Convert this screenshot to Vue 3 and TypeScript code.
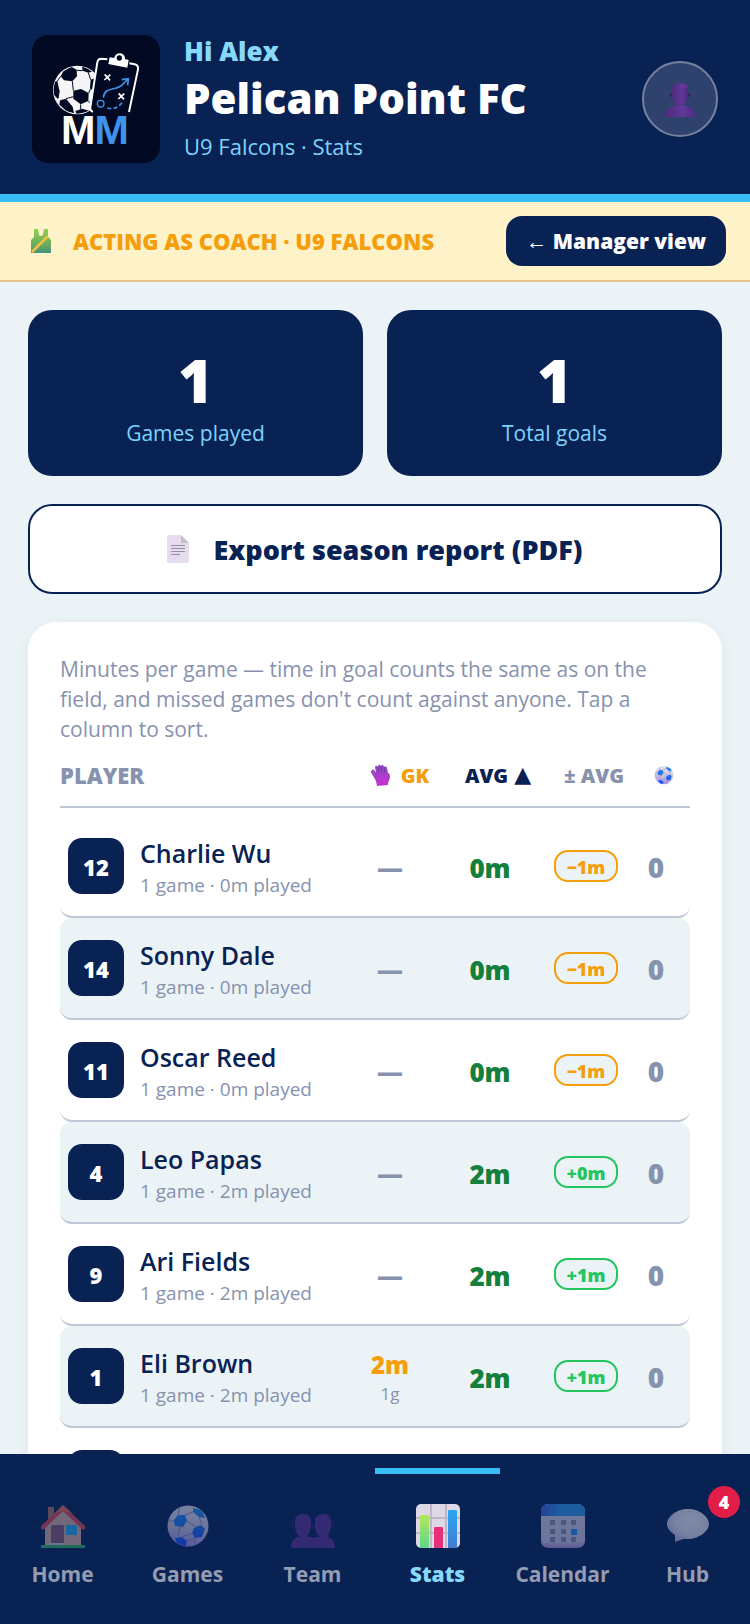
<script setup lang="ts">
interface Player {
  id: number
  number: string
  name: string
  detail: string
  gk: string
  gkGames?: string
  avg: string
  diff: string
  goals: string
}

interface Tab {
  id: string
  label: string
  badge?: number
}

const players: Player[] = [
  { id: 1, number: '12', name: 'Charlie Wu', detail: '1 game · 0m played', gk: '—', avg: '0m', diff: '−1m', goals: '0' },
  { id: 2, number: '14', name: 'Sonny Dale', detail: '1 game · 0m played', gk: '—', avg: '0m', diff: '−1m', goals: '0' },
  { id: 3, number: '11', name: 'Oscar Reed', detail: '1 game · 0m played', gk: '—', avg: '0m', diff: '−1m', goals: '0' },
  { id: 4, number: '4', name: 'Leo Papas', detail: '1 game · 2m played', gk: '—', avg: '2m', diff: '+0m', goals: '0' },
  { id: 5, number: '9', name: 'Ari Fields', detail: '1 game · 2m played', gk: '—', avg: '2m', diff: '+1m', goals: '0' },
  { id: 6, number: '1', name: 'Eli Brown', detail: '1 game · 2m played', gk: '2m', gkGames: '1g', avg: '2m', diff: '+1m', goals: '0' },
  { id: 7, number: '', name: '', detail: '', gk: '', avg: '', diff: '', goals: '' },
]

const tabs: Tab[] = [
  { id: 'home', label: 'Home' },
  { id: 'games', label: 'Games' },
  { id: 'team', label: 'Team' },
  { id: 'stats', label: 'Stats' },
  { id: 'calendar', label: 'Calendar' },
  { id: 'hub', label: 'Hub', badge: 4 },
]

const activeTab = 'stats'
</script>

<template>
  <div class="app">
    <svg class="defs" aria-hidden="true">
      <defs>
        <linearGradient id="ballBase" x1="0.6" y1="0" x2="0.4" y2="1">
          <stop offset="0" stop-color="#e9e6ee" /><stop offset="0.6" stop-color="#c4bedb" /><stop offset="1" stop-color="#a391f2" />
        </linearGradient>
        <linearGradient id="ballPatch" x1="0" y1="0" x2="0" y2="1">
          <stop offset="0" stop-color="#2391ee" /><stop offset="1" stop-color="#2449f4" />
        </linearGradient>
        <clipPath id="ballClip"><circle cx="22" cy="22" r="20" /></clipPath>
        <symbol id="ball" viewBox="0 0 44 44">
          <circle cx="22" cy="22" r="20.500" fill="url(#ballBase)" />
          <g clip-path="url(#ballClip)">
            <path d="M12 11l7 0 2 6-4 6-8-1-1-6zM27 4l9 2 3 8-6-1-6-5zM28 24l7-3 4 4-3 8-7 1-3-5zM9 34l7-1 5 4-2 7-7 0z" fill="url(#ballPatch)" />
            <path d="M19 11l8-3M21 17l9 6M14 23l-2 9M8 17H1M16 33l10-4M33 13l3 8M12 11l2-8M29 34l0 10M21 37l8-3" fill="none" stroke="#8d87b5" />
          </g>
        </symbol>
      </defs>
    </svg>

    <header class="top">
      <svg class="logo" viewBox="36 12 384 384" role="img" aria-label="Team logo">
        <defs>
          <clipPath id="logoBall"><path d="M90 90H233L211 240 180 262H90z" /></clipPath>
          <clipPath id="logoBallRound"><circle cx="172" cy="177" r="71" /></clipPath>
        </defs>
        <rect x="36" y="12" width="384" height="384" fill="#020922" />
        <g clip-path="url(#logoBall)">
          <circle cx="172" cy="177" r="73" fill="#f5f5f7" />
          <g clip-path="url(#logoBallRound)">
            <path d="M130 121l24-14 16 9 1 20-14 15-25-3-10-12zM160 179l23-5 23 12-1 24-23 10-22-17zM98 152l14-2 6 28-4 26-16-16zM120 208l18-5 20 24 4 20-22-6-22-20zM185 101l34 20-14 4-17-6zM166 240l20-7 22 6-10 16-26 2zM212 146l16-6-6 44-12-14z" fill="#020922" />
            <path d="M157 151l3 28M171 118l17 1M138 203l22-6M112 150l10-14M118 178l-4 24M182 220l0 14M205 125l7 21M206 186l6-14M205 210l10 10M154 107l4-8" fill="none" stroke="#020922" stroke-width="3" />
          </g>
        </g>
        <path d="M262 85l-18-2q-10 0-12 11L211 228q-1 12 8 14M328 97l16 3q12 3 10 15l-27 128" fill="none" stroke="#fff" stroke-width="6" />
        <path d="M269 79l14 2a16 16 0 0 1 32 3l11 3-4 23-57-11z" fill="#fff" />
        <circle cx="298" cy="81" r="8" fill="#020922" />
        <path d="M254 130l16 18M271 131l-18 16M296 187l16 18M313 188l-18 16" stroke="#fff" stroke-width="5" />
        <path d="M250 200c4-36 40-18 60-42l14-14M305 146l20-3-2 20" fill="none" stroke="#3f93ea" stroke-width="5" />
        <path d="M262 231q26 8 46-18" fill="none" stroke="#3f93ea" stroke-width="5" stroke-dasharray="12 7" />
        <circle cx="242" cy="218" r="10" fill="none" stroke="#3f93ea" stroke-width="4" />
        <text class="mark" x="175" y="338" text-anchor="middle" fill="#fff">M</text>
        <text class="mark" x="275" y="338" text-anchor="middle" fill="#3f93ea">M</text>
      </svg>
      <div class="heading">
        <p class="hello">Hi Alex</p>
        <h1>Pelican Point FC</h1>
        <p class="crumb">U9 Falcons · Stats</p>
      </div>
      <button class="avatar" type="button" aria-label="Account">
        <svg viewBox="0 0 36 36">
          <defs>
            <linearGradient id="person" x1="0" y1="0" x2="1" y2="0">
              <stop offset="0" stop-color="#4c2c7c" /><stop offset="0.6" stop-color="#603899" /><stop offset="1" stop-color="#4f2b80" />
            </linearGradient>
          </defs>
          <path d="M2 36c1-8 7-12 16-12s15 4 16 12z" fill="url(#person)" />
          <circle cx="10" cy="14" r="2" fill="#3a1b66" />
          <circle cx="26" cy="14" r="2" fill="#3a1b66" />
          <path d="M10 7q1-5 8-5t8 5v8q-1 9-8 9t-8-9z" fill="url(#person)" />
          <path d="M18 5q4-1 7 1" fill="none" stroke="#7241a4" />
        </svg>
      </button>
    </header>

    <div class="banner">
      <svg class="vest" viewBox="0 0 20 24" aria-hidden="true">
        <defs>
          <linearGradient id="vest" x1="0" y1="0" x2="0" y2="1">
            <stop offset="0" stop-color="#8ed04f" /><stop offset="0.7" stop-color="#68a95e" /><stop offset="1" stop-color="#408f80" />
          </linearGradient>
        </defs>
        <path d="M3 0h4l1 6q2 2 4 0l1-6h4v8l3 3v13H0V11l3-3z" fill="url(#vest)" />
        <path d="M1 23L17 7" stroke="#f6bf42" stroke-width="2.500" />
      </svg>
      <strong class="acting">ACTING AS COACH · U9 FALCONS</strong>
      <button class="switch" type="button"><span class="arrow">←</span> Manager view</button>
    </div>

    <main>
      <section class="totals" aria-label="Season totals">
        <div class="total"><strong>1</strong><span>Games played</span></div>
        <div class="total"><strong>1</strong><span>Total goals</span></div>
      </section>

      <button class="export" type="button">
        <svg viewBox="0 0 22 28" aria-hidden="true">
          <path d="M2 0h12l8 8v18q0 2-2 2H2q-2 0-2-2V2q0-2 2-2z" fill="#e6dcef" />
          <path d="M14 0l8 8h-8z" fill="#c5c0ca" />
          <path d="M4 10.500h14M4 13.500h14M4 16.500h14M4 19.500h9" stroke="#978e9f" />
        </svg>
        Export season report (PDF)
      </button>

      <section class="card">
        <p class="note">Minutes per game — time in goal counts the same as on the field, and missed games don't count against anyone. Tap a column to sort.</p>
        <table>
          <thead>
            <tr>
              <th scope="col"><button type="button" class="player-head">PLAYER</button></th>
              <th scope="col">
                <button type="button" class="gk-head">
                  <svg class="glove" viewBox="0 0 20 22" aria-hidden="true">
                    <defs>
                      <linearGradient id="glove" x1="0" y1="0" x2="0.300" y2="1">
                        <stop offset="0" stop-color="#8450bd" /><stop offset="1" stop-color="#c232cf" />
                      </linearGradient>
                    </defs>
                    <path d="M1 6q2-2 4 3l-1-6q1-3 3 0V2q1-3 3 0 2-3 3 1 2-2 3 1l1 5q2 0 2 5l-2 5v2L6 22l-1-5-4-7q-2-3 0-4z" fill="url(#glove)" />
                    <path d="M7 3l1 6M10 2l1 6M13 3l1 6" stroke="#6d36a8" />
                  </svg>
                  GK
                </button>
              </th>
              <th scope="col" aria-sort="ascending"><button type="button" class="sorted">AVG <span class="caret">▲</span></button></th>
              <th scope="col"><button type="button">± AVG</button></th>
              <th scope="col">
                <button type="button" aria-label="Goals"><svg class="ball-head" aria-hidden="true"><use href="#ball" /></svg></button>
              </th>
            </tr>
          </thead>
          <tbody>
            <tr v-for="p in players" :key="p.id">
              <td class="player">
                <span class="number">{{ p.number }}</span>
                <span class="who"><b>{{ p.name }}</b><small>{{ p.detail }}</small></span>
              </td>
              <td class="gk" :class="{ kept: p.gkGames }">
                <span>{{ p.gk }}</span>
                <small v-if="p.gkGames">{{ p.gkGames }}</small>
              </td>
              <td class="avg">{{ p.avg }}</td>
              <td><span v-if="p.diff" class="pill" :class="p.diff.startsWith('+') ? 'over' : 'under'">{{ p.diff }}</span></td>
              <td class="goals">{{ p.goals }}</td>
            </tr>
          </tbody>
        </table>
      </section>
    </main>

    <nav aria-label="Main">
      <a v-for="t in tabs" :key="t.id" href="#" :class="{ active: t.id === activeTab }" :aria-current="t.id === activeTab ? 'page' : undefined">
        <svg v-if="t.id === 'home'" viewBox="0 0 44 44" aria-hidden="true">
          <path d="M7 3h6v12H7z" fill="#a87560" />
          <path d="M4 21L22 5l18 16v20H4z" fill="#d9b0a0" />
          <path d="M0 41h44v3H0z" fill="#38b35f" />
          <path d="M22 1L0 22v3l2 1L22 7l20 19 2-1v-3z" fill="#e0474f" />
          <path d="M22 1l9 8-9-2-9 3z" fill="#e96c4b" />
          <rect x="10" y="21" width="13" height="20" rx="2" fill="#8d5a77" />
          <path d="M9 39h14v2H9z" fill="#cfc1d6" />
          <rect x="25" y="21" width="11" height="10" rx="1" fill="#28aaf0" />
        </svg>
        <svg v-else-if="t.id === 'games'" viewBox="0 0 44 44" aria-hidden="true"><use href="#ball" /></svg>
        <svg v-else-if="t.id === 'team'" viewBox="0 0 44 44" aria-hidden="true" class="people">
          <path d="M0 44c0-8 4-12 12-12s10 2 11 2 4-2 10-2 11 4 11 12z" />
          <path d="M3 19q-3 2 0 5zM41 19q3 2 0 5zM21 20q2 2 0 4zM24 20q-2 2 0 4z" fill="#52248a" />
          <path d="M4 16q1-6 8-6t8 6v7q-1 10-8 10T4 23zM24 16q1-6 8-6t8 6v7q-1 10-8 10t-8-10z" />
        </svg>
        <svg v-else-if="t.id === 'stats'" viewBox="0 0 44 44" aria-hidden="true">
          <defs>
            <linearGradient id="barGreen" x1="0" y1="0" x2="0" y2="1"><stop offset="0" stop-color="#b4e659" /><stop offset="1" stop-color="#5cd88b" /></linearGradient>
            <linearGradient id="barBlue" x1="0" y1="0" x2="0" y2="1"><stop offset="0" stop-color="#2ba5f4" /><stop offset="1" stop-color="#417dd0" /></linearGradient>
          </defs>
          <rect width="44" height="44" rx="5" fill="#ded7e5" />
          <path d="M15 0v44M30 0v44M0 14h44M0 29h44" stroke="#bdb7c4" stroke-width="2" />
          <rect x="4" y="11" width="9" height="33" rx="1" fill="url(#barGreen)" />
          <rect x="18" y="23" width="9" height="21" rx="1" fill="#e5317b" />
          <rect x="32" y="6" width="9" height="38" rx="1" fill="url(#barBlue)" />
        </svg>
        <svg v-else-if="t.id === 'calendar'" viewBox="0 0 44 44" aria-hidden="true">
          <defs>
            <linearGradient id="calTop" x1="0" y1="0" x2="1" y2="0"><stop offset="0" stop-color="#3a5ddd" /><stop offset="0.400" stop-color="#3296e8" /><stop offset="1" stop-color="#309be4" /></linearGradient>
            <linearGradient id="calPage" x1="0" y1="0" x2="0" y2="1"><stop offset="0" stop-color="#d6d2e2" /><stop offset="0.850" stop-color="#cfc6e2" /><stop offset="1" stop-color="#b08cd0" /></linearGradient>
          </defs>
          <rect width="44" height="44" rx="7" fill="url(#calPage)" />
          <path d="M0 12V8q0-8 8-8h28q8 0 8 8v4z" fill="url(#calTop)" />
          <path d="M9 16h5v5H9zM20 16h5v5h-5zM30 16h5v5h-5zM9 25h5v5H9zM20 25h5v5h-5zM9 33h5v5H9zM20 33h5v5h-5zM30 33h5v5h-5z" fill="#8f88a8" />
          <path d="M30 25h6v6h-6z" fill="#2a91ea" />
        </svg>
        <svg v-else viewBox="0 0 44 44" aria-hidden="true">
          <defs>
            <radialGradient id="bubble" cx="0.600" cy="0.350" r="0.700"><stop offset="0" stop-color="#f2f1f6" /><stop offset="0.600" stop-color="#e4e0ee" /><stop offset="1" stop-color="#c0b2da" /></radialGradient>
          </defs>
          <path d="M22 5c12 0 21 8 21 15S33 35 22 35h-5l-8 3v-7C4 28 1 24 1 20 1 13 10 5 22 5z" fill="url(#bubble)" />
        </svg>
        <span>{{ t.label }}</span>
        <em v-if="t.badge">{{ t.badge }}</em>
      </a>
    </nav>
  </div>
</template>

<style>
body {
  margin: 0;
  background: #ebf3f6;
}
</style>

<style scoped>
.app {
  --navy: #092254;
  --sky: #38bdf8;
  --pale: #7dd3fc;
  --mist: #ebf3f6;
  --muted: #8792af;
  --line: #c2c7d8;
  --amber: #f59e0b;
  display: flex;
  flex-direction: column;
  height: 100vh;
  overflow: hidden;
  background: var(--mist);
  color: var(--navy);
  font-family: "Open Sans", "Noto Sans", sans-serif;
}

.defs {
  position: absolute;
  width: 0;
  height: 0;
}

p,
h1 {
  margin: 0;
}

button {
  padding: 0;
  border: 0;
  background: none;
  color: inherit;
  font: inherit;
  cursor: pointer;
}

.top {
  display: flex;
  align-items: center;
  flex-shrink: 0;
  gap: 24px;
  padding: 34px 32px 30px;
  border-bottom: 8px solid var(--sky);
  background: var(--navy);
}

.logo {
  flex-shrink: 0;
  width: 128px;
  height: 128px;
  border-radius: 16px;
}

.mark {
  font: bold 124px "Liberation Sans", Arial, sans-serif;
}

.heading {
  display: flex;
  flex: 1;
  flex-direction: column;
  gap: 2px;
}

.hello {
  color: #87d9fc;
  font-size: 26px;
  font-weight: 800;
  line-height: 34px;
}

h1 {
  color: #fff;
  font-size: 42px;
  font-weight: 800;
  line-height: 56px;
}

.crumb {
  color: var(--pale);
  font-size: 22px;
  line-height: 36px;
}

.avatar {
  display: grid;
  place-items: center;
  width: 76px;
  height: 76px;
  border: 2px solid #76829f;
  border-radius: 50%;
  background: #2f416d;
}

.avatar svg {
  width: 36px;
  height: 36px;
}

.banner {
  display: flex;
  align-items: center;
  flex-shrink: 0;
  padding: 14px 24px 14px 31px;
  border-bottom: 2px solid #e5c388;
  background: #fdf2c8;
}

.vest {
  width: 20px;
  height: 24px;
  margin-right: 22px;
}

.acting {
  flex: 1;
  color: var(--amber);
  font-size: 22px;
  font-weight: 800;
}

.switch {
  height: 50px;
  padding: 0 20px;
  border-radius: 16px;
  background: var(--navy);
  color: #fff;
  font-size: 21px;
  font-weight: 800;
}

.arrow {
  font-weight: 400;
}

main {
  display: flex;
  flex: 1;
  flex-direction: column;
  gap: 28px;
  min-height: 0;
  padding: 28px;
  overflow: hidden;
}

.totals {
  display: grid;
  flex-shrink: 0;
  grid-template-columns: 1fr 1fr;
  gap: 24px;
}

.total {
  display: flex;
  flex-direction: column;
  align-items: center;
  gap: 4px;
  padding: 36px 16px 28px;
  border-radius: 24px;
  background: var(--navy);
}

.total strong {
  color: #fff;
  font-size: 60px;
  font-weight: 800;
  line-height: 68px;
}

.total span {
  color: var(--pale);
  font-size: 21px;
  line-height: 30px;
}

.export {
  display: flex;
  align-items: center;
  justify-content: center;
  flex-shrink: 0;
  gap: 24px;
  height: 90px;
  border: 2px solid var(--navy);
  border-radius: 24px;
  background: #fff;
  font-size: 27px;
  font-weight: 800;
}

.export svg {
  width: 22px;
  height: 28px;
}

.card {
  flex-shrink: 0;
  padding: 32px;
  border-radius: 28px;
  background: #fff;
  box-shadow: 0 4px 16px rgb(9 34 84 / 6%);
}

.note {
  color: var(--muted);
  font-size: 21px;
  line-height: 30px;
}

table,
thead,
tbody {
  display: block;
}

tr {
  display: grid;
  grid-template-columns: minmax(0, 1fr) 96px 104px 88px 52px;
  align-items: center;
}

th,
td {
  padding: 0;
  text-align: center;
}

thead tr {
  height: 62px;
  margin-bottom: 8px;
  border-bottom: 2px solid var(--line);
}

th {
  color: var(--muted);
  font-size: 20px;
  font-weight: 800;
}

th button {
  display: flex;
  align-items: center;
  justify-content: center;
  gap: 6px;
  width: 100%;
}

th .player-head {
  justify-content: flex-start;
  font-size: 22px;
}

th .gk-head {
  gap: 10px;
  padding-left: 4px;
  color: var(--amber);
}

.glove {
  width: 20px;
  height: 22px;
}

.sorted {
  color: var(--navy);
}

.caret {
  font-family: "DejaVu Sans", sans-serif;
  font-weight: 400;
  font-size: 22px;
  line-height: 22px;
}

.ball-head {
  width: 20px;
  height: 20px;
}

tbody tr {
  height: 100px;
  padding: 0 8px;
  border-bottom: 2px solid var(--line);
  border-radius: 12px;
}

tbody tr:nth-child(even) {
  background: var(--mist);
}

td {
  font-size: 26px;
  font-weight: 800;
}

.player {
  display: flex;
  align-items: center;
  gap: 16px;
  text-align: left;
}

.number {
  display: grid;
  place-items: center;
  box-sizing: border-box;
  width: 56px;
  height: 56px;
  padding-top: 2px;
  border-radius: 14px;
  background: var(--navy);
  color: #fff;
  font-size: 22px;
}

.who,
.gk {
  display: flex;
  flex-direction: column;
}

.who {
  padding-top: 2px;
}

.who b {
  height: 36px;
  font-size: 25px;
  font-weight: 600;
  line-height: 36px;
}

.who small {
  height: 28px;
  color: var(--muted);
  font-size: 19px;
  font-weight: 400;
  line-height: 28px;
}

.gk {
  padding-top: 2px;
  color: var(--muted);
  line-height: 34px;
}

.kept {
  color: var(--amber);
  font-size: 24px;
}

.gk small {
  color: var(--muted);
  font-size: 17px;
  font-weight: 400;
  line-height: 24px;
}

.avg {
  padding-top: 4px;
  color: #15803d;
}

.pill {
  display: grid;
  place-items: center;
  box-sizing: border-box;
  width: 64px;
  height: 32px;
  margin: 0 auto;
  padding-top: 2px;
  border: 2px solid;
  border-radius: 14px;
  background: var(--mist);
  font-size: 18px;
}

.over {
  color: #22c55e;
}

.under {
  color: var(--amber);
}

.goals {
  padding-top: 2px;
  color: var(--muted);
  font-size: 28px;
}

nav {
  display: flex;
  flex-shrink: 0;
  height: 170px;
  background: var(--navy);
}

nav a {
  position: relative;
  display: flex;
  flex: 1;
  flex-direction: column;
  align-items: center;
  gap: 10px;
  margin: 14px 0;
  padding-top: 30px;
  border-top: 6px solid transparent;
  color: #949cb2;
  font-size: 21px;
  font-weight: 700;
  line-height: 32px;
  text-decoration: none;
}

nav a svg {
  width: 44px;
  height: 44px;
  opacity: 0.5;
}

nav a.active {
  border-top-color: var(--sky);
  color: #87d9fc;
  font-weight: 800;
}

nav a.active svg {
  opacity: 1;
}

.people {
  fill: #5f3193;
}

nav em {
  position: absolute;
  top: 12px;
  right: 10px;
  width: 32px;
  height: 32px;
  border-radius: 50%;
  background: #e11d48;
  color: #fff;
  font-size: 18px;
  font-style: normal;
  font-weight: 800;
  text-align: center;
}
</style>
